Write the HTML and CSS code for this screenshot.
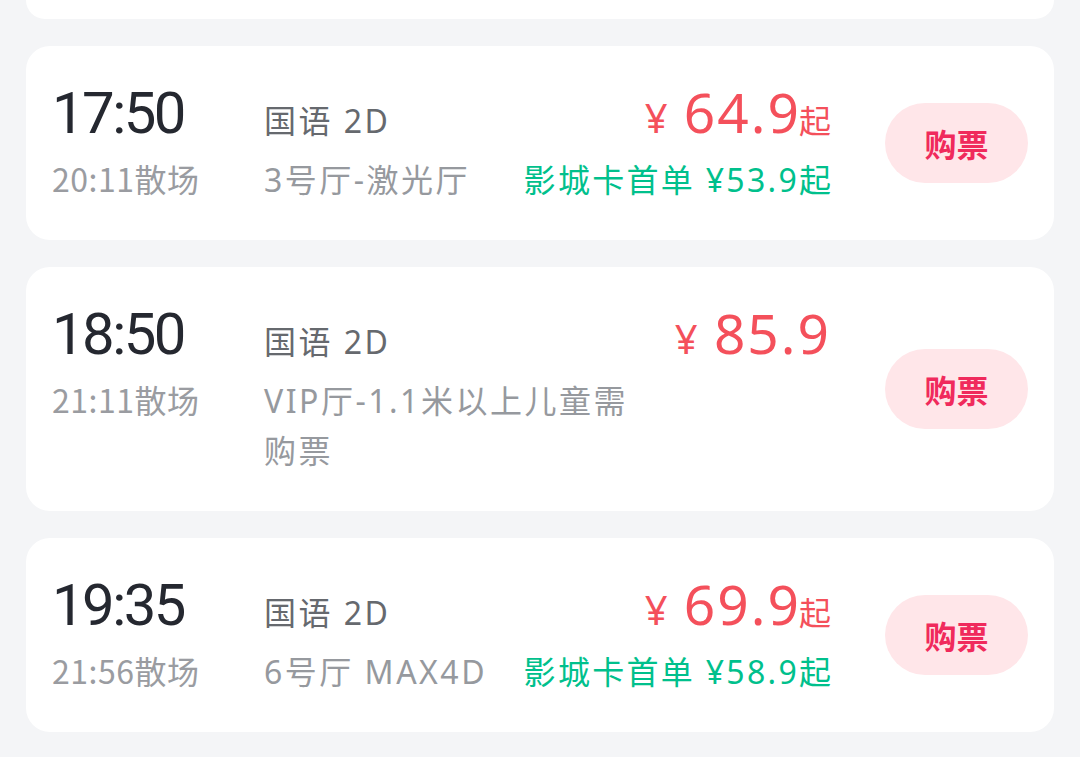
FILE: index.html
```html
<!DOCTYPE html>
<html>
<head>
  <meta charset="utf-8">
  <title>场次列表</title>
  <link rel="stylesheet" href="styles.css">
</head>
<body>
  <div class="showList">
    <div class="showCard stub"></div>

    <div class="showCard">
      <div class="showTime">
        <div class="startAt">17:50</div>
        <div class="endAt">20:11散场</div>
      </div>
      <div class="showInfo">
        <div class="lang">国语 2D</div>
        <div class="hall">3号厅-激光厅</div>
      </div>
      <div class="showPrice">
        <div class="price"><span class="yen">¥</span> 64.9<span class="from">起</span></div>
        <div class="cardPrice">影城卡首单 ¥53.9起</div>
      </div>
      <button class="buyBtn">购票</button>
    </div>

    <div class="showCard">
      <div class="showTime">
        <div class="startAt">18:50</div>
        <div class="endAt">21:11散场</div>
      </div>
      <div class="showInfo">
        <div class="lang">国语 2D</div>
        <div class="hall">VIP厅-1.1米以上儿童需购票</div>
      </div>
      <div class="showPrice">
        <div class="price"><span class="yen">¥</span> 85.9</div>
      </div>
      <button class="buyBtn">购票</button>
    </div>

    <div class="showCard">
      <div class="showTime">
        <div class="startAt">19:35</div>
        <div class="endAt">21:56散场</div>
      </div>
      <div class="showInfo">
        <div class="lang">国语 2D</div>
        <div class="hall">6号厅 MAX4D</div>
      </div>
      <div class="showPrice">
        <div class="price"><span class="yen">¥</span> 69.9<span class="from">起</span></div>
        <div class="cardPrice">影城卡首单 ¥58.9起</div>
      </div>
      <button class="buyBtn">购票</button>
    </div>
  </div>
</body>
</html>
```

FILE: styles.css
```css
* {
  margin: 0;
  padding: 0;
  box-sizing: border-box;
}
body {
  background-color: #f4f5f7;
  font-family: "Noto Sans CJK SC", "Noto Sans", sans-serif;
}
.showList {
  display: flex;
  flex-direction: column;
  gap: 27px;
  padding: 0 26px;
}
.showCard {
  display: flex;
  align-items: baseline;
  padding: 35px 26px 35px 26px;
  background-color: #fff;
  border-radius: 24px;
}
.showCard.stub {
  height: 19px;
  padding: 0;
  border-radius: 0 0 24px 24px;
}
.showTime {
  flex: none;
  width: 212px;
}
.startAt {
  font-family: Roboto, "Noto Sans", sans-serif;
  font-size: 58px;
  line-height: 61px;
  letter-spacing: -2.5px;
  color: #252830;
  margin-bottom: 9px;
}
.endAt {
  font-size: 32px;
  line-height: 50px;
  letter-spacing: 0.5px;
  color: #9a9ca1;
}
.showInfo {
  flex: 0 1 375px;
  margin-right: auto;
  font-family: "Noto Sans", "Noto Sans CJK SC", sans-serif;
  font-size: 32px;
  line-height: 50px;
  letter-spacing: 2.5px;
}
.lang {
  color: #66696e;
  margin-bottom: 9px;
}
.hall {
  color: #96999e;
}
.showPrice {
  flex: none;
  text-align: right;
}
.price {
  font-family: "Noto Sans", "Noto Sans CJK SC", sans-serif;
  font-size: 55px;
  line-height: 61px;
  letter-spacing: 2px;
  color: #f4505b;
  margin-bottom: 12.5px;
}
.price .yen {
  font-size: 40px;
  line-height: 1;
  letter-spacing: 0;
}
.price .from {
  font-family: "Noto Sans CJK SC", sans-serif;
  font-size: 32px;
  line-height: 1;
  letter-spacing: 0;
  margin-left: -2px;
}
.cardPrice {
  font-family: "Noto Sans", "Noto Sans CJK SC", sans-serif;
  font-size: 32px;
  line-height: 50px;
  letter-spacing: 2.3px;
  margin-right: -2.3px;
  color: #00c08c;
}
.buyBtn {
  flex: none;
  align-self: center;
  width: 143px;
  height: 80px;
  margin-left: 54px;
  border: none;
  outline: none;
  border-radius: 40px;
  background-color: #ffe6e9;
  font-family: "Noto Sans CJK SC", sans-serif;
  font-size: 32px;
  font-weight: bold;
  color: #f02a5c;
  cursor: pointer;
}
```
